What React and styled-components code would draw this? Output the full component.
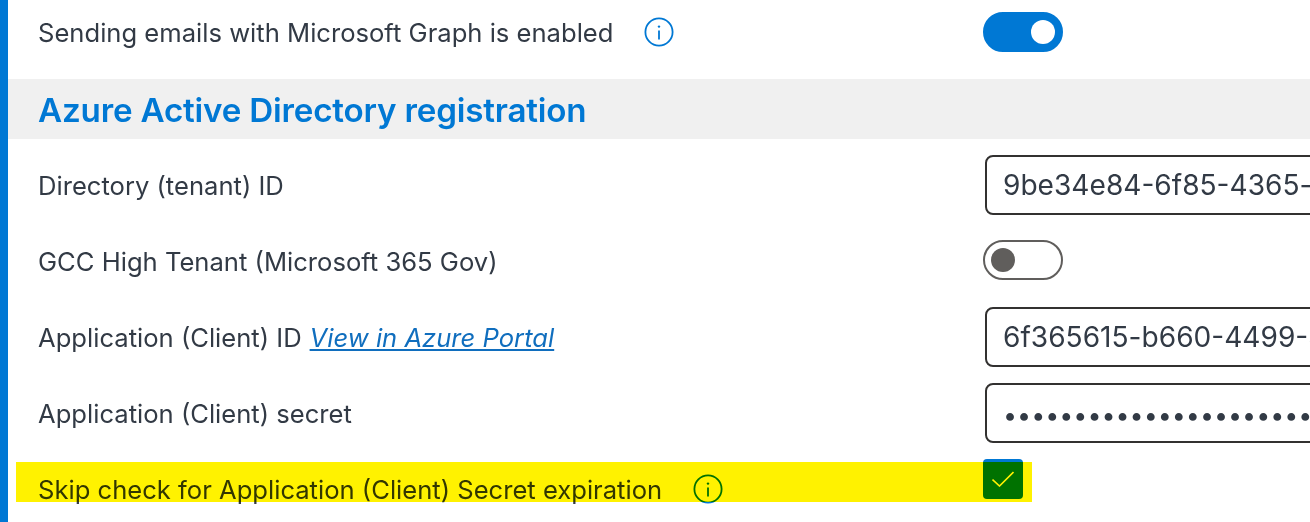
import React from 'react';
import styled, { createGlobalStyle } from 'styled-components';

const GlobalStyle = createGlobalStyle`
  html, body {
    margin: 0;
    padding: 0;
    background: #fff;
  }
  body {
    font-family: Inter, "Liberation Sans", sans-serif;
    color: #323a45;
  }
`;

const Page = styled.div`
  position: relative;
  width: 1310px;
  height: 522px;
  box-sizing: border-box;
  border-left: 8px solid #0078d4;
  overflow: hidden;
`;

const Row = styled.div`
  display: grid;
  grid-template-columns: 945px 1fr;
  align-items: center;
  height: ${props => props.height || 76}px;
  padding-left: 30px;
`;

const Label = styled.div`
  display: flex;
  align-items: center;
  font-size: 25.6px;
  line-height: 32px;
  white-space: nowrap;
`;

const InfoButton = styled.span`
  display: inline-flex;
  margin-left: 31px;
  margin-bottom: 2px;
  color: #0078d4;
`;

const PortalLink = styled.a`
  margin-left: 8px;
  color: #106ebe;
  font-style: italic;
  text-decoration: underline;
`;

const SectionHeader = styled.div`
  display: flex;
  align-items: center;
  box-sizing: border-box;
  height: 60px;
  margin-top: 13px;
  margin-bottom: 9px;
  padding: 2px 0 0 30px;
  background: #f0f0f0;
`;

const SectionTitle = styled.h2`
  margin: 0;
  color: #0078d4;
  font-size: 33.2px;
  font-weight: 600;
  letter-spacing: -0.2px;
`;

const Toggle = styled.div`
  display: flex;
  align-items: center;
  justify-content: ${props => (props.on ? 'flex-end' : 'flex-start')};
  box-sizing: border-box;
  width: 80px;
  height: 40px;
  margin-bottom: ${props => (props.on ? 2 : 4)}px;
  padding: 0 6px;
  border: 2px solid ${props => (props.on ? '#0078d4' : '#605e5c')};
  border-radius: 20px;
  background: ${props => (props.on ? '#0078d4' : '#fff')};
`;

const Knob = styled.span`
  width: 24px;
  height: 24px;
  border-radius: 50%;
  background: ${props => (props.on ? '#fff' : '#605e5c')};
`;

const TextInput = styled.input`
  box-sizing: border-box;
  width: 500px;
  height: 60px;
  margin-left: 2px;
  margin-bottom: 2px;
  padding: 0 16px;
  border: 2px solid #323130;
  border-radius: 8px;
  outline: none;
  background: #fff;
  color: #323a45;
  font-family: inherit;
  font-size: 28.1px;
`;

const SecretInput = styled(TextInput)`
  padding-top: 3px;
  font-size: 25px;
`;

const Checkbox = styled.div`
  display: flex;
  align-items: center;
  justify-content: center;
  width: 40px;
  height: 40px;
  margin-bottom: 22px;
  border-radius: 4px;
  background: #0078d4;
  color: #fff;
`;

const Highlight = styled.div`
  position: absolute;
  left: 8px;
  top: 462px;
  width: 1016px;
  height: 40px;
  background: #fff200;
  mix-blend-mode: multiply;
`;

const InfoIcon = () => (
  <svg width="30" height="30" viewBox="0 0 30 30" fill="none" stroke="currentColor" strokeWidth="1.8">
    <circle cx="15" cy="15" r="13.6" />
    <path d="M15 13.5v9" />
    <circle cx="15" cy="9.6" r="1.2" fill="currentColor" stroke="none" />
  </svg>
);

const CheckIcon = () => (
  <svg width="22" height="16" viewBox="0 0 22 16" fill="none" stroke="currentColor" strokeWidth="1.6">
    <path d="M0.5 8.5L7.5 15L21.5 1" />
  </svg>
);

const App = () => (
  <>
    <GlobalStyle />
    <Page>
      <Row height={66}>
        <Label>
          Sending emails with Microsoft Graph is enabled
          <InfoButton><InfoIcon /></InfoButton>
        </Label>
        <Toggle on><Knob on /></Toggle>
      </Row>
      <SectionHeader>
        <SectionTitle>Azure Active Directory registration</SectionTitle>
      </SectionHeader>
      <Row>
        <Label>Directory (tenant) ID</Label>
        <TextInput readOnly value="9be34e84-6f85-4365-a1c2-7d09e3b5f6aa" />
      </Row>
      <Row>
        <Label>GCC High Tenant (Microsoft 365 Gov)</Label>
        <Toggle><Knob /></Toggle>
      </Row>
      <Row>
        <Label>
          Application (Client) ID
          <PortalLink>View in Azure Portal</PortalLink>
        </Label>
        <TextInput readOnly value="6f365615-b660-4499-8e1d-2c47a90b1d3e" />
      </Row>
      <Row>
        <Label>Application (Client) secret</Label>
        <SecretInput readOnly type="password" value="abcdefghijklmnopqrstuvwxyzabcdefghij" />
      </Row>
      <Row>
        <Label>
          Skip check for Application (Client) Secret expiration
          <InfoButton><InfoIcon /></InfoButton>
        </Label>
        <Checkbox><CheckIcon /></Checkbox>
      </Row>
      <Highlight />
    </Page>
  </>
);

export default App;
